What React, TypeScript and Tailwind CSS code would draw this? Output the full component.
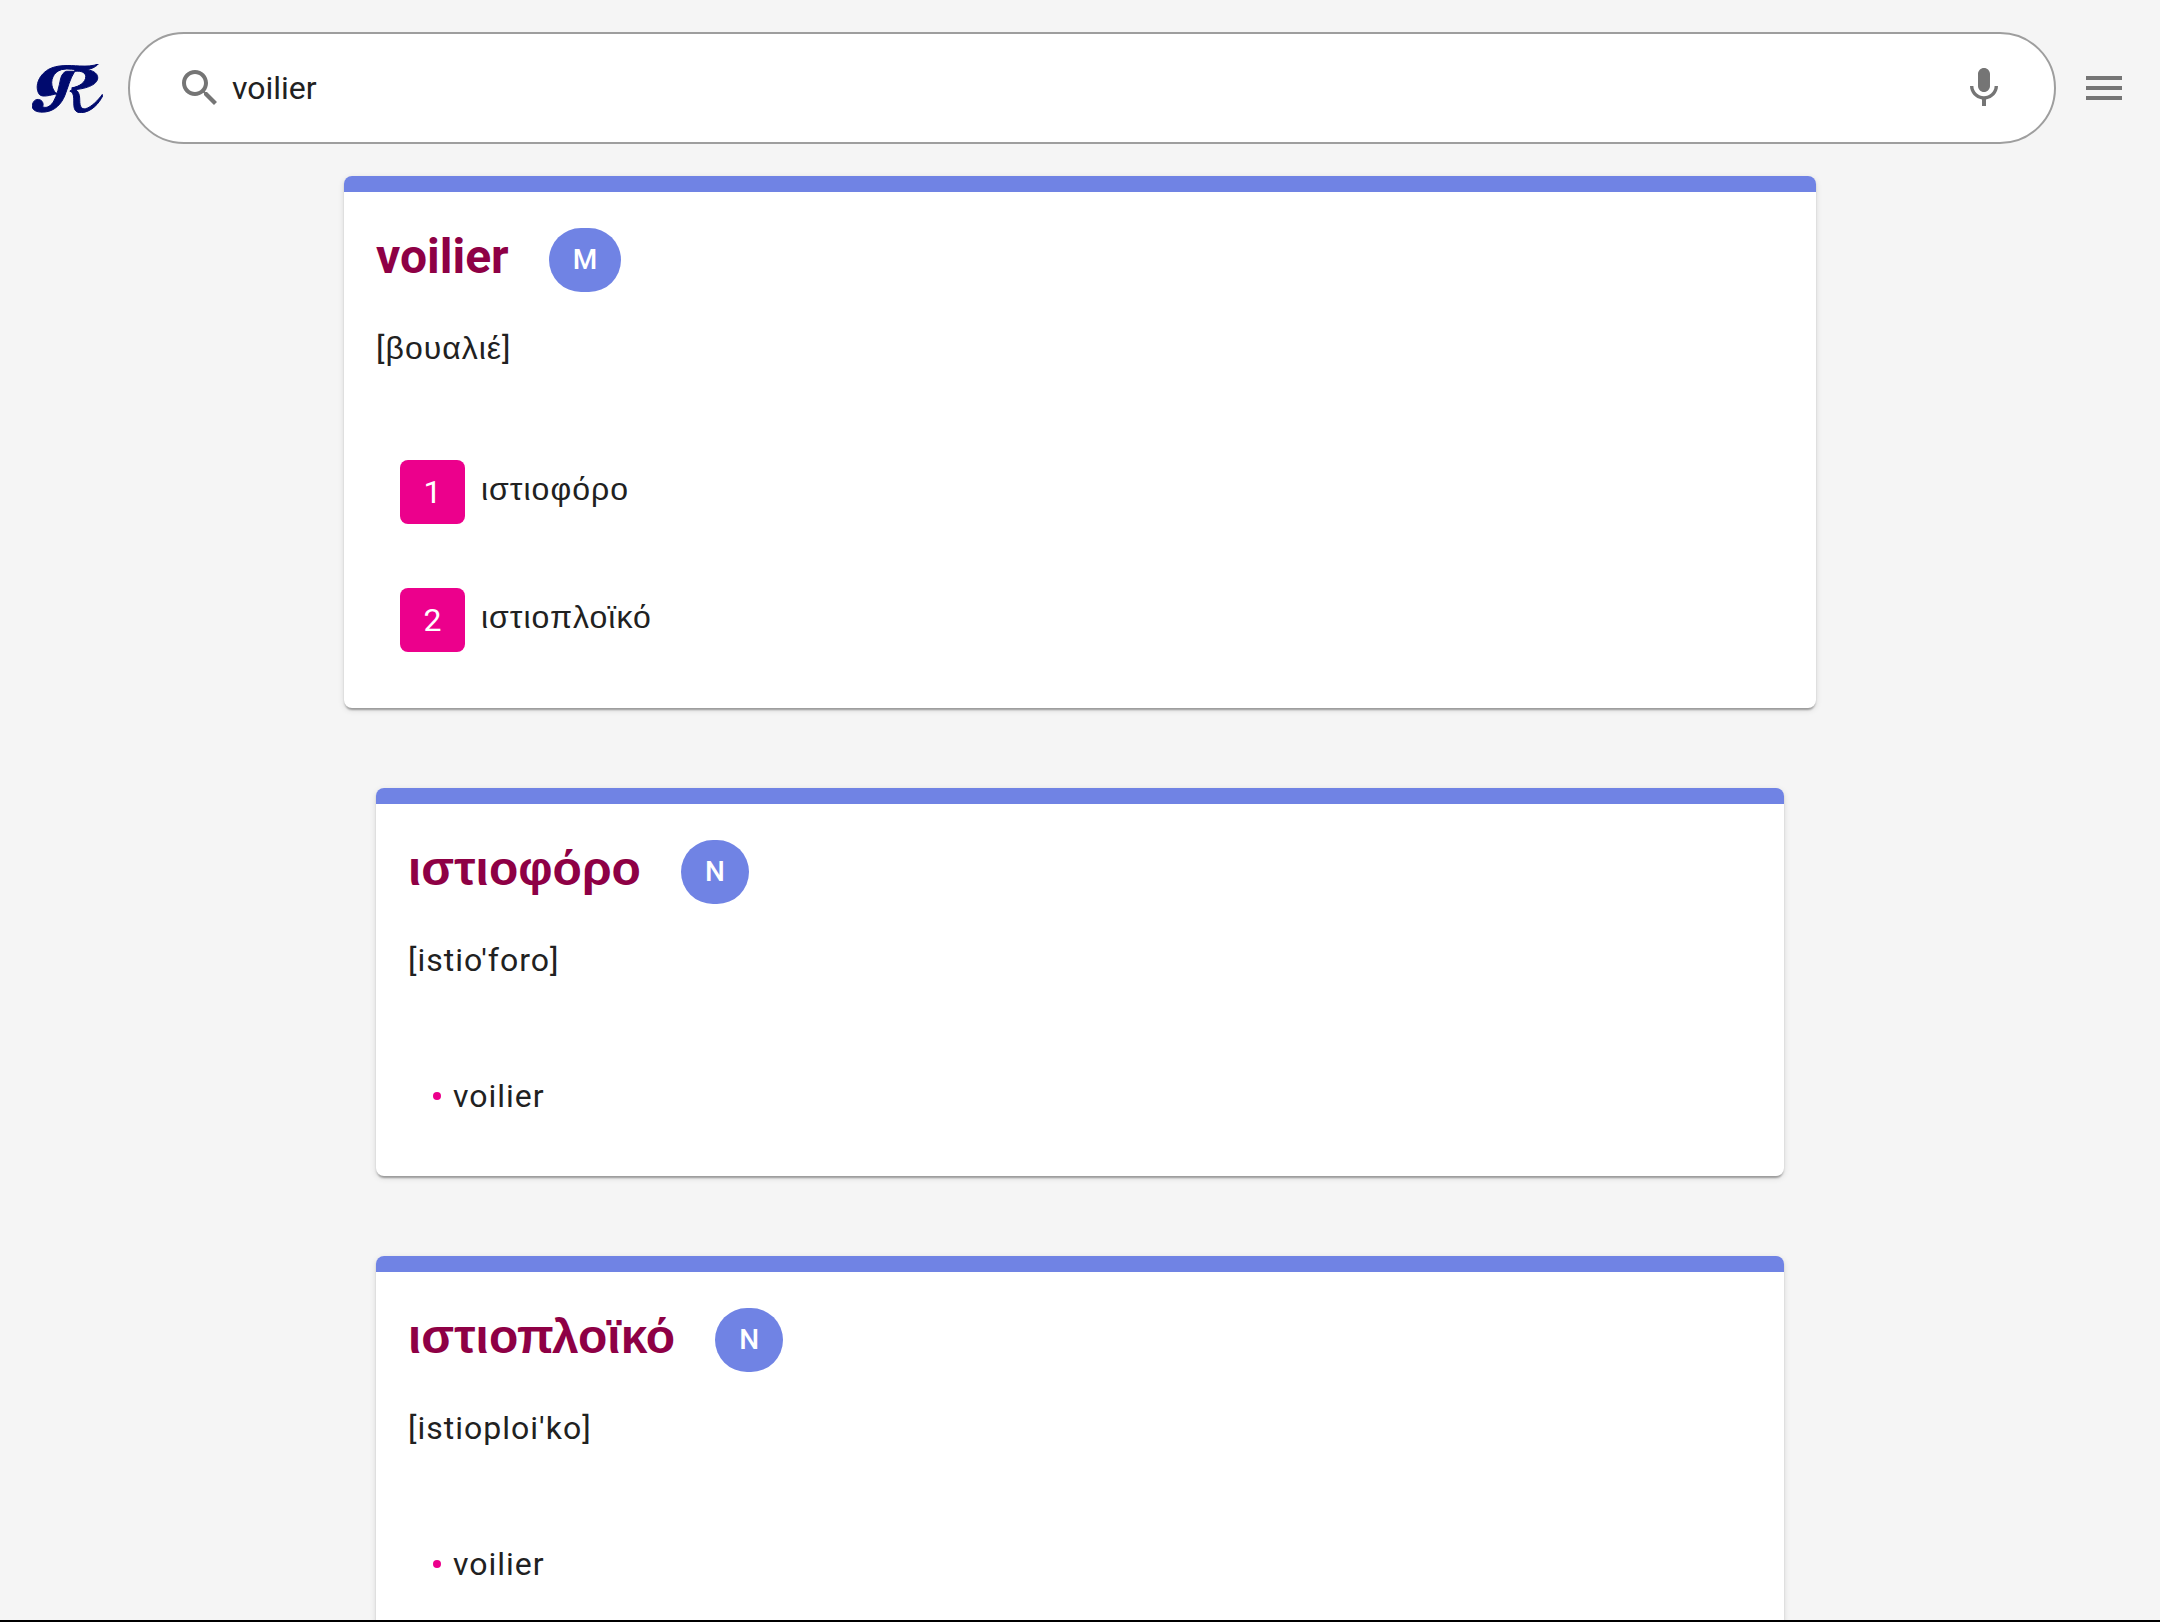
import React from "react";

const Logo = () => (
  <svg width="71" height="49" viewBox="96 190 214 148" fill="#000a6e" stroke="#000a6e" strokeWidth="3" className="shrink-0">
    <path d="M118 282C104 262 112 226 146 206C172 192 205 194 240 196C262 197 280 196 296 190C288 200 270 208 248 208C225 208 205 202 185 207C160 214 150 240 158 262C162 272 166 276 172 280C150 284 128 292 118 282Z" />
    <path d="M200 212C192 214 185 222 182 235C178 255 172 285 160 305C150 320 135 325 128 318C132 312 128 298 115 297C102 296 96 308 97 320C98 332 115 337 135 335C165 332 185 310 195 285C205 260 210 235 225 212Z" />
    <path d="M225 207C255 203 290 208 294 228C298 250 265 265 218 268L216 262C240 258 258 245 258 228C258 216 245 210 225 212Z" />
    <path d="M218 266C235 266 240 280 240 300C240 318 245 328 258 325C275 320 295 300 308 282L310 285C298 310 275 335 245 337C225 338 222 325 222 308C222 290 222 275 210 272Z" />
  </svg>
);

const SearchIcon = () => (
  <svg width="48" height="48" viewBox="0 0 24 24" fill="#757575" className="shrink-0">
    <path d="M15.5 14h-.79l-.28-.27C15.410 12.590 16 11.110 16 9.500 16 5.910 13.090 3 9.500 3S3 5.910 3 9.500 5.910 16 9.500 16c1.610 0 3.090-.59 4.230-1.570l.27.28v.79l5 4.990L20.490 19l-4.990-5zm-6 0C7.010 14 5 11.990 5 9.500S7.010 5 9.500 5 14 7.010 14 9.500 11.990 14 9.500 14z" />
  </svg>
);

const MicIcon = () => (
  <svg width="48" height="48" viewBox="0 0 24 24" fill="#757575" className="shrink-0">
    <path d="M12 14c1.660 0 2.990-1.340 2.990-3L15 5c0-1.660-1.340-3-3-3S9 3.340 9 5v6c0 1.660 1.340 3 3 3zm5.300-3c0 3-2.540 5.100-5.300 5.100S6.700 14 6.700 11H5c0 3.410 2.720 6.230 6 6.720V21h2v-3.280c3.280-.48 6-3.300 6-6.720h-1.700z" />
  </svg>
);

const MenuIcon = () => (
  <svg width="48" height="48" viewBox="0 0 24 24" fill="#757575" className="ml-6 shrink-0">
    <path d="M3 18h18v-2H3v2zm0-5h18v-2H3v2zm0-7v2h18V6H3z" />
  </svg>
);

const Word = ({
  title,
  greek,
  gender,
  phonetic,
  inset,
  children,
}: {
  title: string;
  greek?: boolean;
  gender: string;
  phonetic: React.ReactNode;
  inset?: boolean;
  children: React.ReactNode;
}) => (
  <div
    className={`shrink-0 rounded-lg bg-white overflow-hidden shadow-[0_4px_2px_-2px_rgba(0,0,0,0.2),0_2px_2px_0_rgba(0,0,0,0.14),0_2px_6px_0_rgba(0,0,0,0.12)] ${
      inset ? "w-[1408px] mt-[80px]" : "w-[1472px]"
    }`}
  >
    <div className="h-4 bg-[#7083e4]" />
    <div className="px-8 pt-[36px]">
      <div className="flex items-start gap-10">
        <h2
          className={`text-[48px] font-bold text-[#8e0045] ${
            greek ? "leading-[58px] font-['Liberation_Sans',sans-serif]" : "leading-[58px] font-['Roboto',sans-serif]"
          }`}
        >
          {title}
        </h2>
        <span className="flex h-16 min-w-[64px] px-6 items-center justify-center rounded-[32px] bg-[#7083e4] text-[28px] font-medium text-white">
          {gender}
        </span>
      </div>
      <p className="mt-8 text-[32px] leading-[48px] tracking-[1px] text-[#212121]">
        {phonetic}
      </p>
      {children}
    </div>
  </div>
);

const Meaning = ({ n, text }: { n: number; text: string }) => (
  <div className="flex items-start h-16 ml-6 mb-[64px] last:mb-0">
    <span className="flex h-16 w-[65px] items-center justify-center rounded-lg bg-[#ec008c] text-[32px] text-white">
      {n}
    </span>
    <span className="ml-4 text-[32px] leading-[58px] tracking-[1px] text-[#212121] font-['Liberation_Sans',sans-serif]">
      {text}
    </span>
  </div>
);

const Translation = ({ text }: { text: string }) => (
  <div className="flex items-center mt-[88px] pl-[25px] pb-[56px]">
    <span className="h-2 w-2 rounded-full bg-[#ec008c]" />
    <span className="ml-[12px] text-[32px] leading-[48px] tracking-[1px] text-[#212121]">{text}</span>
  </div>
);

export default function App() {
  return (
    <div className="h-[1622px] overflow-hidden border-b-2 border-black bg-[#f5f5f5] font-['Roboto',sans-serif]">
      <header className="flex items-center pt-8 pl-8">
        <Logo />
        <div className="ml-[25px] flex h-[112px] w-[1928px] items-center rounded-[56px] border-2 border-[#9e9e9e] bg-white pl-[46px] pr-[46px]">
          <SearchIcon />
          <span className="ml-2 flex-1 text-[32px] text-[#212121]">voilier</span>
          <MicIcon />
        </div>
        <MenuIcon />
      </header>

      <main className="mt-8 flex flex-col items-center">
        <Word
          title="voilier"
          gender="M"
          phonetic={
            <>
              [<span className="font-['Liberation_Sans',sans-serif]">βουαλιέ</span>]
            </>
          }
        >
          <div className="mt-[88px] pb-[56px]">
            <Meaning n={1} text="ιστιοφόρο" />
            <Meaning n={2} text="ιστιοπλοϊκό" />
          </div>
        </Word>
        <Word inset greek title="ιστιοφόρο" gender="N" phonetic="[istio'foro]">
          <Translation text="voilier" />
        </Word>
        <Word inset greek title="ιστιοπλοϊκό" gender="N" phonetic="[istioploi'ko]">
          <Translation text="voilier" />
        </Word>
      </main>
    </div>
  );
}
